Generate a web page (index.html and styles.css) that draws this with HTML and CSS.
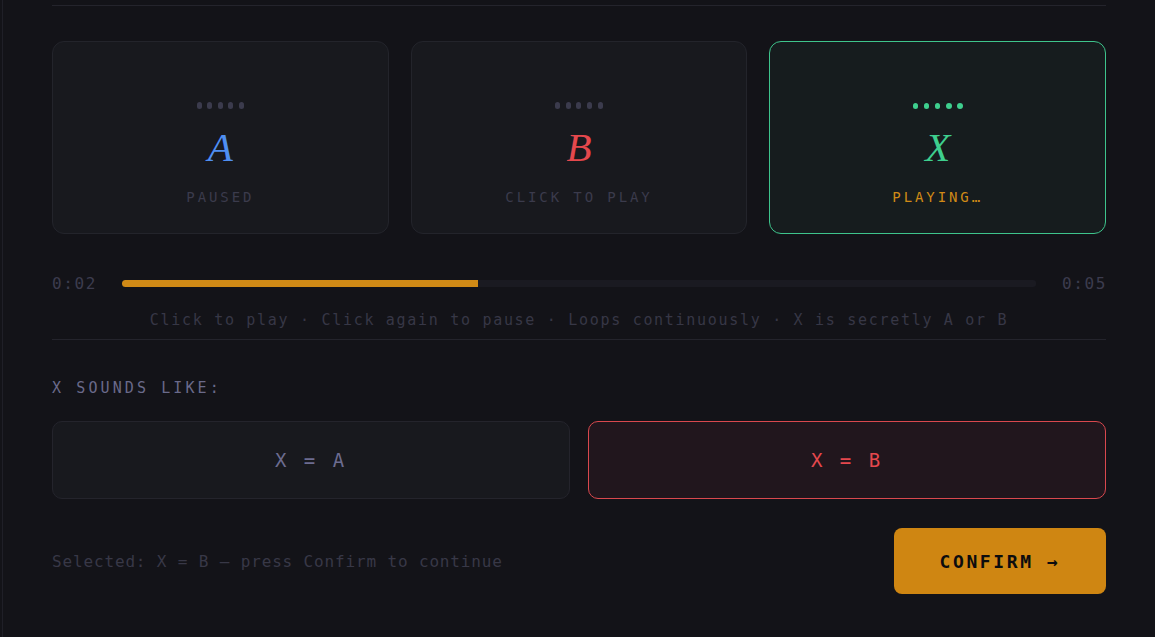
FILE: index.html
```html
<!DOCTYPE html>
<html lang="en">
<head>
<meta charset="utf-8">
<title>ABX Test</title>
<link rel="stylesheet" href="styles.css">
</head>
<body>
<main class="panel">
  <div class="rule rule-top"></div>

  <section class="players">
    <div class="player">
      <div class="dots"><i></i><i></i><i></i><i></i><i></i></div>
      <div class="letter letter-a">A</div>
      <div class="status">PAUSED</div>
    </div>
    <div class="player">
      <div class="dots"><i></i><i></i><i></i><i></i><i></i></div>
      <div class="letter letter-b">B</div>
      <div class="status">CLICK TO PLAY</div>
    </div>
    <div class="player player-active">
      <div class="dots dots-active"><i></i><i></i><i></i><i></i><i></i></div>
      <div class="letter letter-x">X</div>
      <div class="status status-playing">PLAYING…</div>
    </div>
  </section>

  <section class="progress">
    <span class="time">0:02</span>
    <div class="track"><div class="fill" style="width: 39%"></div></div>
    <span class="time time-end">0:05</span>
  </section>

  <p class="hint">Click to play · Click again to pause · Loops continuously · X is secretly A or B</p>

  <div class="rule"></div>

  <h2 class="question">X SOUNDS LIKE:</h2>

  <section class="choices">
    <button class="choice">X = A</button>
    <button class="choice choice-selected">X = B</button>
  </section>

  <section class="footer">
    <span class="selected-note">Selected: X = B — press Confirm to continue</span>
    <button class="confirm">CONFIRM →</button>
  </section>
</main>
</body>
</html>
```

FILE: styles.css
```css
* { box-sizing: border-box; }

html, body {
  margin: 0;
  padding: 0;
  background: #131318;
  overflow: hidden;
  height: 100%;
}

body {
  font-family: "DejaVu Sans Mono", "Liberation Mono", monospace;
}

.panel {
  width: 1155px;
  margin-left: 2px;
  min-height: 100%;
  border-left: 1px solid #1f1f27;
  border-right: 1px solid #1f1f27;
  padding: 5px 50px 0 49px;
}

.rule {
  height: 1px;
  background: #24242c;
}

.players {
  margin-top: 35px;
  display: grid;
  grid-template-columns: repeat(3, 1fr);
  gap: 22px;
}

.player {
  height: 193px;
  background: #18191e;
  border: 1px solid #23242b;
  border-radius: 12px;
  display: flex;
  flex-direction: column;
  align-items: center;
  padding-top: 60px;
}

.player-active {
  background: #161c1e;
  border-color: #3ec48c;
}

.dots {
  display: flex;
  gap: 5.6px;
  height: 7px;
}

.dots i {
  display: block;
  width: 5px;
  height: 7px;
  border-radius: 3px;
  background: #3b3b4d;
}

.dots-active {
  align-items: center;
}

.dots-active i {
  height: 6px;
  width: 5.5px;
  background: #3ecf8e;
}

.letter {
  margin-top: 17px;
  font-family: "Liberation Serif", serif;
  font-style: italic;
  font-size: 41px;
  line-height: 42px;
}

.letter-a { color: #4f8ff2; }
.letter-b { color: #e5484d; }
.letter-x { color: #3ecf8e; }

.status {
  margin-top: 21px;
  font-size: 14px;
  line-height: 16px;
  letter-spacing: 2.9px;
  color: #3b3b4c;
}

.status-playing {
  color: #d08a16;
}

.progress {
  margin-top: 39px;
  display: flex;
  align-items: center;
  gap: 26px;
  height: 20px;
}

.time {
  width: 44px;
  font-size: 16px;
  letter-spacing: 1.6px;
  color: #3c3c4e;
  white-space: nowrap;
}

.time-end {
  text-align: right;
}

.track {
  flex: 1;
  height: 7px;
  background: #1a1a21;
  border-radius: 3px;
}

.fill {
  height: 100%;
  background: #d08a16;
  border-radius: 4px 0 0 4px;
}

.hint {
  margin: 18px 0 10px;
  text-align: center;
  font-size: 15px;
  line-height: 18px;
  letter-spacing: 1.7px;
  color: #373746;
}

.question {
  margin: 39px 0 0;
  font-weight: normal;
  font-size: 15px;
  line-height: 18px;
  letter-spacing: 3.1px;
  color: #6a6a8a;
}

.choices {
  margin-top: 24px;
  display: grid;
  grid-template-columns: 1fr 1fr;
  gap: 18px;
}

.choice {
  height: 78px;
  border-radius: 10px;
  background: #18191e;
  border: 1px solid #24242c;
  font-family: "DejaVu Sans Mono", "Liberation Mono", monospace;
  font-size: 19px;
  letter-spacing: 3px;
  color: #6c6c90;
  padding: 0;
}

.choice-selected {
  background: #21161d;
  border-color: #d9484e;
  color: #e5484d;
}

.footer {
  margin-top: 29px;
  display: flex;
  align-items: center;
  justify-content: space-between;
}

.selected-note {
  font-size: 16px;
  letter-spacing: 0.85px;
  color: #383847;
}

.confirm {
  width: 212px;
  height: 66px;
  border: none;
  border-radius: 8px;
  background: #cf8612;
  color: #0c0c0e;
  font-family: "DejaVu Sans Mono", "Liberation Mono", monospace;
  font-size: 18px;
  font-weight: bold;
  letter-spacing: 2.6px;
  padding: 0;
}
```
